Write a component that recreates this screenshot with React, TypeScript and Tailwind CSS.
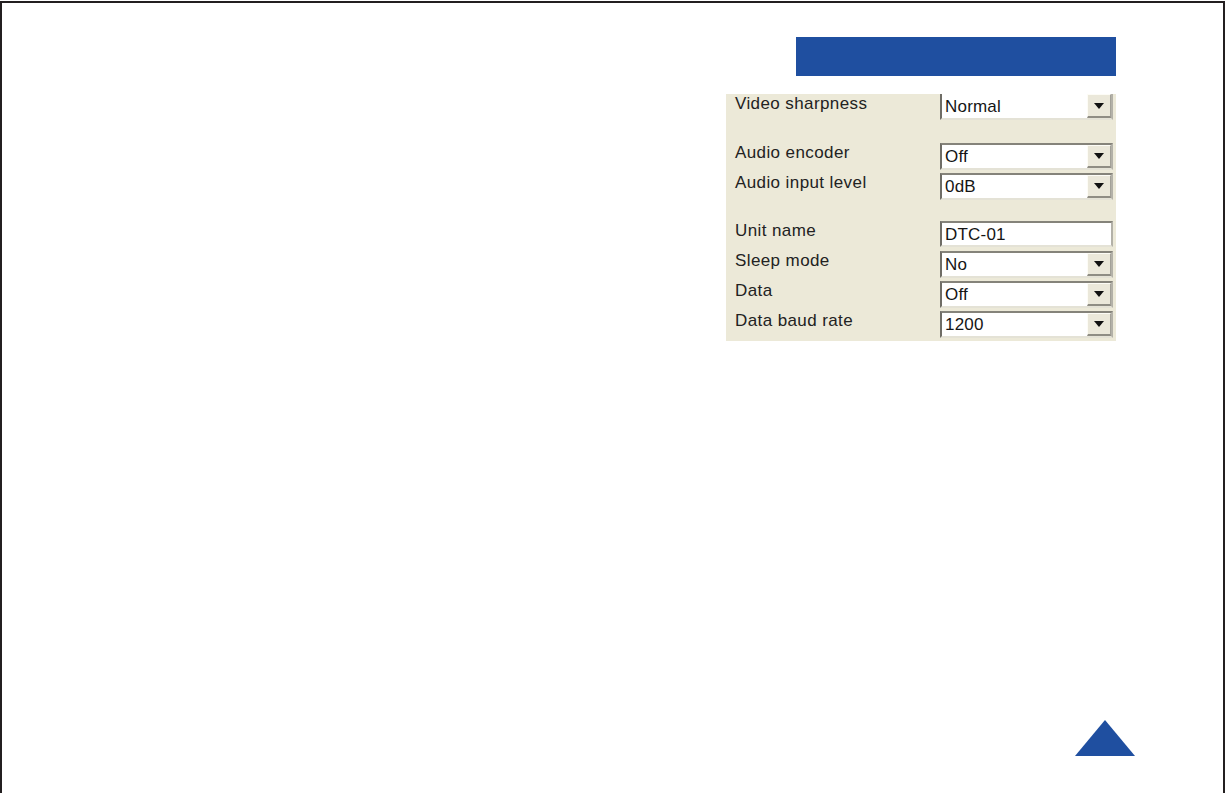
import React from "react";

const font = { fontFamily: '"Liberation Sans", Arial, sans-serif' };

function Arrow() {
  return (
    <div className="flex h-full w-[24px] shrink-0 items-center justify-center border border-t-[#fdfcf6] border-l-[#fdfcf6] border-b-2 border-b-[#8f8d84] border-r-[#a3a198] bg-[#ebe8da]">
      <svg width="10" height="6" viewBox="0 0 10 6">
        <polygon points="0,0 10,0 5,6" fill="#111" />
      </svg>
    </div>
  );
}

function Field({ value, dropdown = true, noTop = false, h = "h-[27px]" }: { value: string; dropdown?: boolean; noTop?: boolean; h?: string }) {
  return (
    <div
      className={`flex ${h} w-[173px] items-stretch border-2 border-l-[#6f6d66] border-t-[#85837a] border-r-[#b3b1a8] border-b-[#e4e2d6] bg-white ${noTop ? "border-t-0" : ""}`}
    >
      <div className="flex flex-1 items-center pl-[3px] text-[17px] leading-none tracking-[0.2px] text-[#151515]">{value}</div>
      {dropdown && <Arrow />}
    </div>
  );
}

function Row({ label, value, dropdown = true, noTop = false, h = "h-[30px]", fh = "h-[27px]" }: { label: string; value: string; dropdown?: boolean; noTop?: boolean; h?: string; fh?: string }) {
  return (
    <div className={`flex ${h} items-start`}>
      <div className="w-[214px] pl-[9px] text-[17px] leading-[20px] tracking-[0.4px] text-[#222]">{label}</div>
      <Field value={value} dropdown={dropdown} noTop={noTop} h={fh} />
    </div>
  );
}

export default function App() {
  return (
    <div className="h-[793px] w-[1225px] overflow-hidden bg-white" style={font}>
      <div className="mt-[1px] h-[800px] w-[1225px] border-x-2 border-t-2 border-[#231f20]">
        <div className="flex flex-col">
          <div className="ml-[794px] mt-[34px] h-[39px] w-[320px] bg-[#1f4fa0]" />
          <div className="ml-[724px] mt-[18px] flex h-[247px] w-[390px] flex-col overflow-hidden bg-[#ece9d8]">
            <Row label="Video sharpness" value="Normal" noTop h="h-[26px]" fh="h-[26px]" />
            <div className="h-[23px]" />
            <Row label="Audio encoder" value="Off" />
            <Row label="Audio input level" value="0dB" />
            <div className="h-[18px]" />
            <Row label="Unit name" value="DTC-01" dropdown={false} fh="h-[26px]" />
            <Row label="Sleep mode" value="No" />
            <Row label="Data" value="Off" />
            <Row label="Data baud rate" value="1200" />
          </div>
          <div className="ml-[1073px] mt-[379px]">
            <svg width="60" height="36" viewBox="0 0 60 36">
              <polygon points="30,0 60,36 0,36" fill="#1f4fa0" />
            </svg>
          </div>
        </div>
      </div>
    </div>
  );
}
